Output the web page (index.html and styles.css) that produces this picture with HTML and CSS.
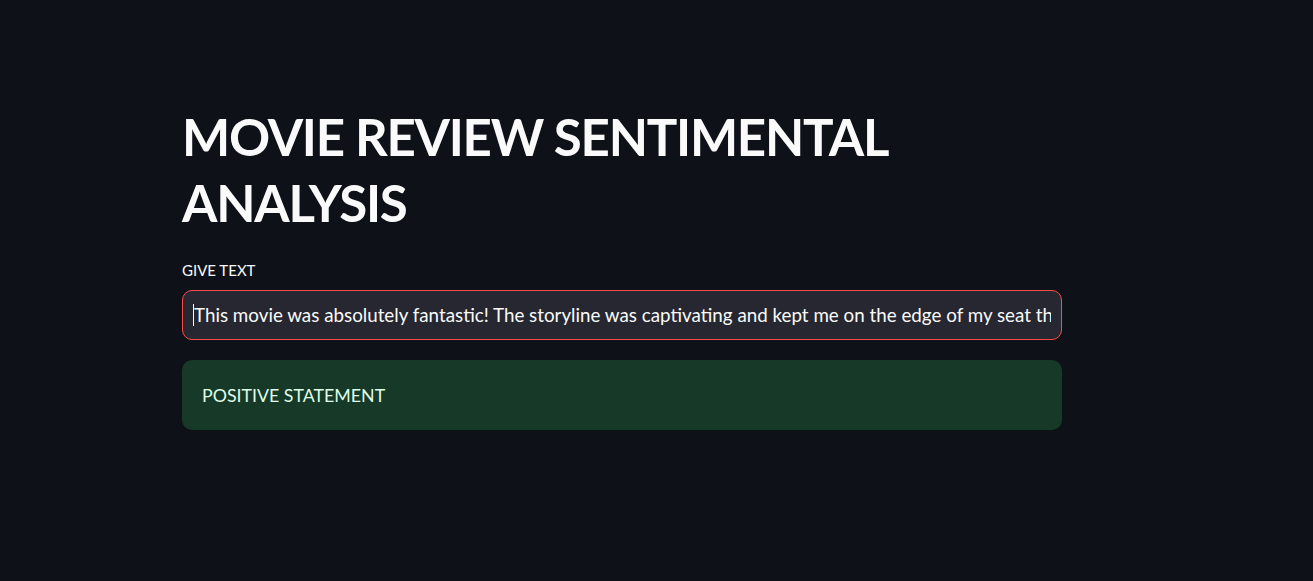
FILE: index.html
```html
<!DOCTYPE html>
<html lang="en">
<head>
<meta charset="utf-8">
<title>Movie Review Sentimental Analysis</title>
<link rel="stylesheet" href="styles.css">
</head>
<body>
<main class="app">
  <div class="block">
    <h1 class="title">MOVIE REVIEW SENTIMENTAL ANALYSIS</h1>
    <div class="field">
      <label class="label" for="review">GIVE TEXT</label>
      <div class="input-wrap">
        <input id="review" class="input" type="text" value="This movie was absolutely fantastic! The storyline was captivating and kept me on the edge of my seat throughout the entire film.">
      </div>
    </div>
    <div class="alert">POSITIVE STATEMENT</div>
  </div>
</main>
</body>
</html>
```
FILE: styles.css
```css
html, body {
  margin: 0;
  padding: 0;
  background: #0e1117;
  height: 100%;
}
body {
  font-family: "Lato", "Noto Sans", sans-serif;
  color: #fafafa;
}
.app {
  display: flex;
  padding-top: 104px;
  padding-left: 182px;
}
.block {
  width: 880px;
  display: flex;
  flex-direction: column;
  gap: 20px;
}
.title {
  margin: 0;
  font-size: 51px;
  line-height: 66px;
  font-weight: 700;
  letter-spacing: -1.25px;
  color: #fafafa;
}
.field {
  display: flex;
  flex-direction: column;
}
.label {
  display: flex;
  align-items: center;
  min-height: 28px;
  margin-bottom: 6px;
  font-size: 15px;
  color: #fafafa;
}
.input-wrap {
  position: relative;
}
.input-wrap::before {
  content: "";
  position: absolute;
  left: 11px;
  top: 14px;
  width: 1px;
  height: 22px;
  background: #fafafa;
}
.input {
  box-sizing: border-box;
  width: 100%;
  height: 50px;
  padding: 0 10px 1px 11px;
  background: #262730;
  border: 1px solid #ff4b4b;
  border-radius: 10px;
  color: #fafafa;
  font-family: inherit;
  font-size: 18.8px;
  outline: none;
}
.alert {
  box-sizing: border-box;
  padding: 20px;
  line-height: 30px;
  font-size: 17.8px;
  border-radius: 10px;
  background: #173928;
  color: #dffde9;
}
```
